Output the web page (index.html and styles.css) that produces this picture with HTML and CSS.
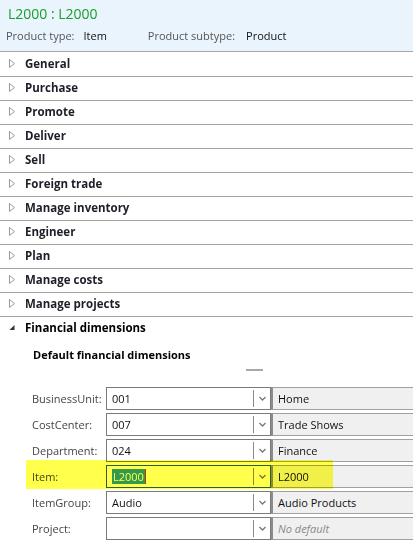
FILE: index.html
```html
<!DOCTYPE html>
<html>
<head>
<meta charset="utf-8">
<link rel="stylesheet" href="styles.css">
</head>
<body>
<div class="header">
  <div class="title">L2000 : L2000</div>
  <div class="meta">
    <span class="k">Product type:</span><span class="v">Item</span>
    <span class="k k2">Product subtype:</span><span class="v v2">Product</span>
  </div>
</div>
<ul class="sections">
  <li class="sec"><svg class="tri" width="6" height="9" viewBox="0 0 6 9"><polygon points="0.5,0.5 5.5,4.5 0.5,8.5" fill="none" stroke="#9a9a9a" stroke-width="1"/></svg><span>General</span></li>
  <li class="sec"><svg class="tri" width="6" height="9" viewBox="0 0 6 9"><polygon points="0.5,0.5 5.5,4.5 0.5,8.5" fill="none" stroke="#9a9a9a" stroke-width="1"/></svg><span>Purchase</span></li>
  <li class="sec"><svg class="tri" width="6" height="9" viewBox="0 0 6 9"><polygon points="0.5,0.5 5.5,4.5 0.5,8.5" fill="none" stroke="#9a9a9a" stroke-width="1"/></svg><span>Promote</span></li>
  <li class="sec"><svg class="tri" width="6" height="9" viewBox="0 0 6 9"><polygon points="0.5,0.5 5.5,4.5 0.5,8.5" fill="none" stroke="#9a9a9a" stroke-width="1"/></svg><span>Deliver</span></li>
  <li class="sec"><svg class="tri" width="6" height="9" viewBox="0 0 6 9"><polygon points="0.5,0.5 5.5,4.5 0.5,8.5" fill="none" stroke="#9a9a9a" stroke-width="1"/></svg><span>Sell</span></li>
  <li class="sec"><svg class="tri" width="6" height="9" viewBox="0 0 6 9"><polygon points="0.5,0.5 5.5,4.5 0.5,8.5" fill="none" stroke="#9a9a9a" stroke-width="1"/></svg><span>Foreign trade</span></li>
  <li class="sec"><svg class="tri" width="6" height="9" viewBox="0 0 6 9"><polygon points="0.5,0.5 5.5,4.5 0.5,8.5" fill="none" stroke="#9a9a9a" stroke-width="1"/></svg><span>Manage inventory</span></li>
  <li class="sec"><svg class="tri" width="6" height="9" viewBox="0 0 6 9"><polygon points="0.5,0.5 5.5,4.5 0.5,8.5" fill="none" stroke="#9a9a9a" stroke-width="1"/></svg><span>Engineer</span></li>
  <li class="sec"><svg class="tri" width="6" height="9" viewBox="0 0 6 9"><polygon points="0.5,0.5 5.5,4.5 0.5,8.5" fill="none" stroke="#9a9a9a" stroke-width="1"/></svg><span>Plan</span></li>
  <li class="sec"><svg class="tri" width="6" height="9" viewBox="0 0 6 9"><polygon points="0.5,0.5 5.5,4.5 0.5,8.5" fill="none" stroke="#9a9a9a" stroke-width="1"/></svg><span>Manage costs</span></li>
  <li class="sec"><svg class="tri" width="6" height="9" viewBox="0 0 6 9"><polygon points="0.5,0.5 5.5,4.5 0.5,8.5" fill="none" stroke="#9a9a9a" stroke-width="1"/></svg><span>Manage projects</span></li>
  <li class="sec open"><svg class="tri" width="6" height="9" viewBox="0 0 6 9"><polygon points="5.5,2 5.5,7 0.5,7" fill="#333"/></svg><span>Financial dimensions</span></li>
</ul>
<div class="fin">
  <div class="group-title">Default financial dimensions</div>
  <div class="grip"></div>
  <div class="rows">
    <div class="row">
      <div class="lbl">BusinessUnit:</div>
      <div class="combo"><span class="val">001</span><span class="btn"><svg width="7" height="5" viewBox="0 0 7 5"><polyline points="0.5,1 3.5,4 6.5,1" fill="none" stroke="#777" stroke-width="1.3"/></svg></span></div>
      <div class="desc">Home</div>
    </div>
    <div class="row">
      <div class="lbl">CostCenter:</div>
      <div class="combo"><span class="val">007</span><span class="btn"><svg width="7" height="5" viewBox="0 0 7 5"><polyline points="0.5,1 3.5,4 6.5,1" fill="none" stroke="#777" stroke-width="1.3"/></svg></span></div>
      <div class="desc">Trade Shows</div>
    </div>
    <div class="row">
      <div class="lbl">Department:</div>
      <div class="combo"><span class="val">024</span><span class="btn"><svg width="7" height="5" viewBox="0 0 7 5"><polyline points="0.5,1 3.5,4 6.5,1" fill="none" stroke="#777" stroke-width="1.3"/></svg></span></div>
      <div class="desc">Finance</div>
    </div>
    <div class="row item">
      <div class="lbl">Item:</div>
      <div class="combo focus"><span class="val"><span class="sel">L2000</span><span class="caret"></span></span><span class="btn"><svg width="7" height="5" viewBox="0 0 7 5"><polyline points="0.5,1 3.5,4 6.5,1" fill="none" stroke="#777" stroke-width="1.3"/></svg></span></div>
      <div class="desc">L2000</div>
      <div class="highlight"></div>
    </div>
    <div class="row">
      <div class="lbl">ItemGroup:</div>
      <div class="combo"><span class="val">Audio</span><span class="btn"><svg width="7" height="5" viewBox="0 0 7 5"><polyline points="0.5,1 3.5,4 6.5,1" fill="none" stroke="#777" stroke-width="1.3"/></svg></span></div>
      <div class="desc">Audio Products</div>
    </div>
    <div class="row">
      <div class="lbl">Project:</div>
      <div class="combo"><span class="val"></span><span class="btn"><svg width="7" height="5" viewBox="0 0 7 5"><polyline points="0.5,1 3.5,4 6.5,1" fill="none" stroke="#777" stroke-width="1.3"/></svg></span></div>
      <div class="desc placeholder">No default</div>
    </div>
  </div>
</div>
</body>
</html>
```

FILE: styles.css
```css
* { box-sizing: border-box; }
html, body {
  margin: 0;
  padding: 0;
  background: #fff;
  overflow: hidden;
}
body {
  font-family: "Open Sans", "Noto Sans", sans-serif;
  font-size: 11px;
  color: #111;
  width: 413px;
  height: 553px;
}
.header {
  height: 52px;
  background: #eaf4fc;
  border-bottom: 1px solid #a9a9a9;
  padding: 4px 0 0 8px;
}
.title {
  font-size: 14px;
  line-height: 20px;
  color: #17a02c;
}
.meta {
  margin-top: 4px;
  margin-left: -2px;
  line-height: 16px;
  display: flex;
  font-size: 11px;
}
.meta .k { color: #555; }
.meta .v { color: #111; margin-left: 9px; }
.meta .k2 { margin-left: 41px; }
.meta .v2 { margin-left: 11px; }

.sections {
  list-style: none;
  margin: 0;
  padding: 1px 0 0 0;
}
.sec {
  height: 24px;
  border-bottom: 1px solid #a2a2a2;
  display: flex;
  align-items: center;
  padding: 0 0 3px 9px;
  font-weight: 700;
  font-size: 11.5px;
  color: #1e1e28;
}
.sec .tri { margin-right: 10px; flex: none; }
.sec.open { border-bottom: none; color: #000; }

.group-title {
  margin-top: 6px;
  padding-left: 33px;
  font-weight: 700;
  font-size: 11px;
  line-height: 16px;
  color: #000;
}
.grip {
  margin: 6px 0 0 246px;
  width: 17px;
  height: 2px;
  background: #a8a8a8;
}
.rows {
  margin-top: 16px;
  display: flex;
  flex-direction: column;
  gap: 3px;
}
.row {
  position: relative;
  display: flex;
  height: 23px;
  align-items: stretch;
}
.lbl {
  width: 106px;
  padding-left: 32px;
  color: #454545;
  display: flex;
  align-items: center;
  white-space: nowrap;
}
.combo {
  width: 165px;
  border: 1px solid #7a7a7a;
  background: #fff;
  display: flex;
}
.combo .val {
  flex: 1;
  display: flex;
  align-items: center;
  padding-left: 5px;
  color: #111;
}
.combo .btn {
  width: 17px;
  border-left: 1px solid #8a8a8a;
  margin: 2px 0;
  display: flex;
  align-items: center;
  justify-content: center;
}
.combo.focus { border-color: #2a5f9a; }
.sel {
  background: #3399ff;
  color: #fff;
  padding: 0 1px;
  line-height: 15px;
}
.caret {
  display: inline-block;
  width: 1px;
  height: 15px;
  background: #c23c00;
}
.desc {
  flex: 1;
  background: #f0f0f0;
  border-top: 1px solid #a0a0a0;
  border-bottom: 1px solid #a0a0a0;
  border-left: 2px solid #8c8c8c;
  display: flex;
  align-items: center;
  padding-left: 5px;
  color: #111;
  white-space: nowrap;
}
.desc.placeholder {
  font-style: italic;
  color: #8a8a8a;
}
.highlight {
  position: absolute;
  left: 26px;
  top: -5px;
  width: 307px;
  height: 29px;
  background: #ffff4c;
  mix-blend-mode: multiply;
  pointer-events: none;
}
```
